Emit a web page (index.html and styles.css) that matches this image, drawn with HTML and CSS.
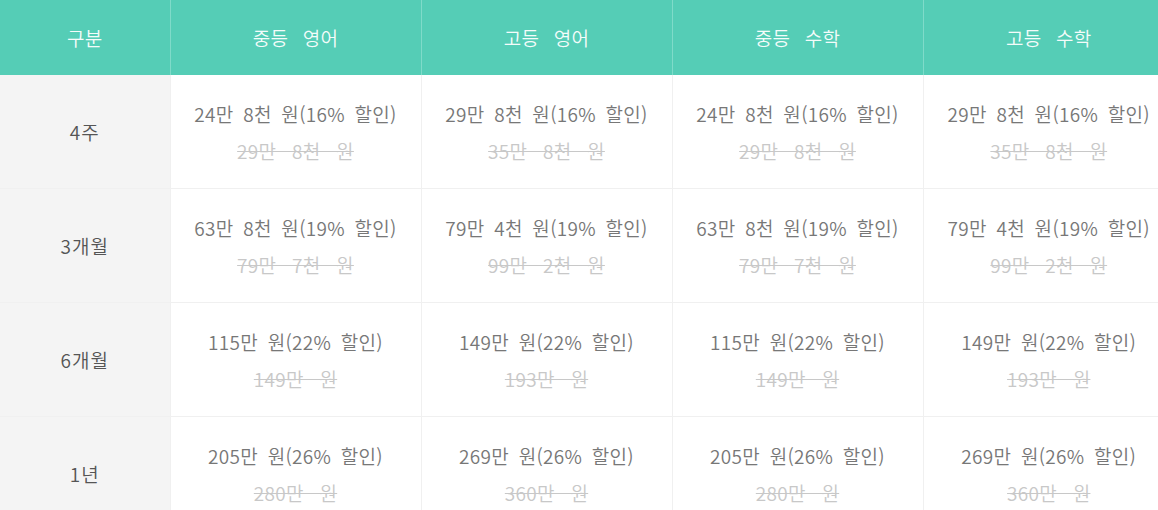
FILE: index.html
```html
<!DOCTYPE html>
<html lang="ko">
<head>
  <meta charset="UTF-8">
  <meta name="viewport" content="width=device-width, initial-scale=1.0">
  <title>수강료 안내</title>
  <link rel="stylesheet" href="styles.css">
</head>
<body>
  <table class="price-table">
    <colgroup>
      <col class="label-col">
      <col class="data-col">
      <col class="data-col">
      <col class="data-col">
      <col class="data-col">
    </colgroup>
    <thead>
      <tr>
        <th class="label-col">구분</th>
        <th>중등 영어</th>
        <th>고등 영어</th>
        <th>중등 수학</th>
        <th>고등 수학</th>
      </tr>
    </thead>
    <tbody>
      <tr>
        <td class="label-col">4주</td>
        <td><p class="sale">24만 8천 원(16% 할인)</p><p class="orig">29만 8천 원</p></td>
        <td><p class="sale">29만 8천 원(16% 할인)</p><p class="orig">35만 8천 원</p></td>
        <td><p class="sale">24만 8천 원(16% 할인)</p><p class="orig">29만 8천 원</p></td>
        <td><p class="sale">29만 8천 원(16% 할인)</p><p class="orig">35만 8천 원</p></td>
      </tr>
      <tr>
        <td class="label-col">3개월</td>
        <td><p class="sale">63만 8천 원(19% 할인)</p><p class="orig">79만 7천 원</p></td>
        <td><p class="sale">79만 4천 원(19% 할인)</p><p class="orig">99만 2천 원</p></td>
        <td><p class="sale">63만 8천 원(19% 할인)</p><p class="orig">79만 7천 원</p></td>
        <td><p class="sale">79만 4천 원(19% 할인)</p><p class="orig">99만 2천 원</p></td>
      </tr>
      <tr>
        <td class="label-col">6개월</td>
        <td><p class="sale">115만 원(22% 할인)</p><p class="orig">149만 원</p></td>
        <td><p class="sale">149만 원(22% 할인)</p><p class="orig">193만 원</p></td>
        <td><p class="sale">115만 원(22% 할인)</p><p class="orig">149만 원</p></td>
        <td><p class="sale">149만 원(22% 할인)</p><p class="orig">193만 원</p></td>
      </tr>
      <tr>
        <td class="label-col">1년</td>
        <td><p class="sale">205만 원(26% 할인)</p><p class="orig">280만 원</p></td>
        <td><p class="sale">269만 원(26% 할인)</p><p class="orig">360만 원</p></td>
        <td><p class="sale">205만 원(26% 할인)</p><p class="orig">280만 원</p></td>
        <td><p class="sale">269만 원(26% 할인)</p><p class="orig">360만 원</p></td>
      </tr>
    </tbody>
  </table>
</body>
</html>
```

FILE: styles.css
```css
body {
  margin: 0;
  font-family: "Noto Sans CJK KR", "Noto Sans", sans-serif;
  font-weight: 350;
  background: #fff;
  overflow: hidden;
}

.price-table {
  border-collapse: collapse;
  table-layout: fixed;
  width: 1174px;
}

.price-table col.label-col {
  width: 170px;
}

.price-table col.data-col {
  width: 251px;
}

.price-table th,
.price-table td {
  text-align: center;
  vertical-align: middle;
  padding: 0;
  letter-spacing: 0.3px;
}

.price-table thead th {
  height: 75px;
  background: #55cdb6;
  color: #f4fcfa;
  font-size: 19px;
  font-weight: 350;
  word-spacing: 9px;
  border-left: 1px solid #7fdbc9;
}

.price-table thead th:first-child {
  border-left: none;
}

.price-table tbody td {
  height: 113px;
  border-bottom: 1px solid #f0f0f0;
  border-left: 1px solid #f0f0f0;
  color: #777;
  font-size: 19px;
}

.price-table tbody td.label-col {
  background: #f4f4f4;
  color: #555;
  letter-spacing: 1px;
  border-left: none;
}

.sale,
.orig {
  margin: 0;
  line-height: 37px;
}

.sale {
  word-spacing: 4px;
}

.orig {
  color: #c8c8c8;
  word-spacing: 10px;
  text-decoration: line-through;
}
```
